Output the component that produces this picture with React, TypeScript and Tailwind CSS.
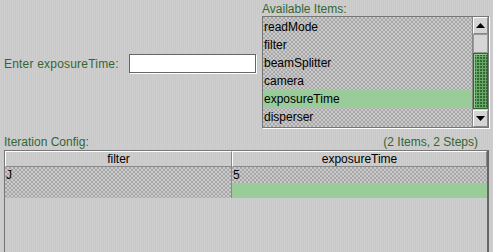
import React from "react";

const dots =
  "bg-[#cacaca] bg-[radial-gradient(circle_at_1px_1px,#a6a6a6_0.7px,transparent_0.9px),radial-gradient(circle_at_3px_3px,#a6a6a6_0.7px,transparent_0.9px)] bg-[length:4px_4px]";

function UpArrow() {
  return (
    <svg width="9" height="5" viewBox="0 0 9 5">
      <polygon points="4.5,0 9,5 0,5" fill="#000" />
    </svg>
  );
}
function DownArrow() {
  return (
    <svg width="9" height="5" viewBox="0 0 9 5">
      <polygon points="0,0 9,0 4.5,5" fill="#000" />
    </svg>
  );
}

export default function App() {
  const items = ["readMode", "filter", "beamSplitter", "camera", "exposureTime", "disperser"];
  return (
    <div
      className="w-[493px] h-[252px] overflow-hidden bg-[#cccccc] bg-[repeating-linear-gradient(90deg,#cecece_0px,#cecece_1px,#c9c9c9_1px,#c9c9c9_2px)] text-[12px] leading-[14px] text-black"
      style={{ fontFamily: '"Liberation Sans", Arial, sans-serif' }}
    >
      {/* top section */}
      <div className="flex h-[130px]">
        <div className="w-[262px] flex items-start pl-[4px] pt-[54px]">
          <div className="w-[125px] h-[19px] flex items-center text-[#336633] tracking-[0.2px]">Enter exposureTime:</div>
          <div className="w-[127px] h-[19px] bg-white border border-[#666666] shadow-[1px_1px_0_#ffffff]" />
        </div>
        <div className="flex flex-col">
          <div className="h-[16px] pt-[2px] text-[#336633]">Available Items:</div>
          <div className="w-[227px] h-[112px] border border-[#777777] shadow-[1px_1px_0_#ffffff] flex">
            <div className={`w-[209px] h-full pt-[1px] ${dots}`}>
              {items.map((it) => (
                <div
                  key={it}
                  className={`h-[18px] pl-[1px] flex items-center ${it === "exposureTime" ? "bg-[#99cc99]" : ""}`}
                >
                  {it}
                </div>
              ))}
            </div>
            <div className="w-[16px] h-full flex flex-col bg-[#cccccc] border-l border-[#888888]">
              <div className="h-[17px] flex items-center justify-center border-t border-l border-white border-b border-r border-b-[#888888] border-r-[#888888] bg-[#d4d4d4]">
                <UpArrow />
              </div>
              <div className="h-[19px] border border-[#999999] bg-[#d6d6d6]" />
              <div className="h-[56px] bg-[#66aa66] bg-[radial-gradient(circle_at_1px_1px,#336633_0.7px,transparent_0.9px)] bg-[length:3px_3px] border border-[#336633] shadow-[inset_1px_1px_0_#99cc99]" />
              <div className="flex-1" />
              <div className="h-[17px] flex items-center justify-center border-t border-l border-white border-b border-r border-b-[#888888] border-r-[#888888] bg-[#d4d4d4]">
                <DownArrow />
              </div>
            </div>
          </div>
        </div>
      </div>

      {/* iteration config label row */}
      <div className="h-[20px] flex items-end justify-between pl-[4px] pr-[15px] pb-[1px] text-[#336633]">
        <span>Iteration Config:</span>
        <span>(2 Items, 2 Steps)</span>
      </div>

      {/* table */}
      <div className="ml-[4px] w-[485px] h-[110px] border-l border-t border-r-2 border-[#777777] border-r-[#666666]">
        <div className="flex h-[16px]">
          <div className="w-[227px] flex items-center justify-center border-t border-l border-white border-b border-r border-b-[#888888] border-r-[#888888]">
            filter
          </div>
          <div className="flex-1 flex items-center justify-center border-t border-l border-white border-b border-r border-b-[#888888] border-r-[#888888]">
            exposureTime
          </div>
        </div>
        <div className="flex h-[16px]">
          <div className={`w-[227px] pl-[1px] flex items-center border-r border-[#888888] ${dots}`}>J</div>
          <div className={`flex-1 pl-[1px] flex items-center ${dots}`}>5</div>
        </div>
        <div className="flex h-[15px]">
          <div className={`w-[227px] border-r border-[#888888] ${dots}`} />
          <div className="flex-1 bg-[#99cc99]" />
        </div>
      </div>
    </div>
  );
}
